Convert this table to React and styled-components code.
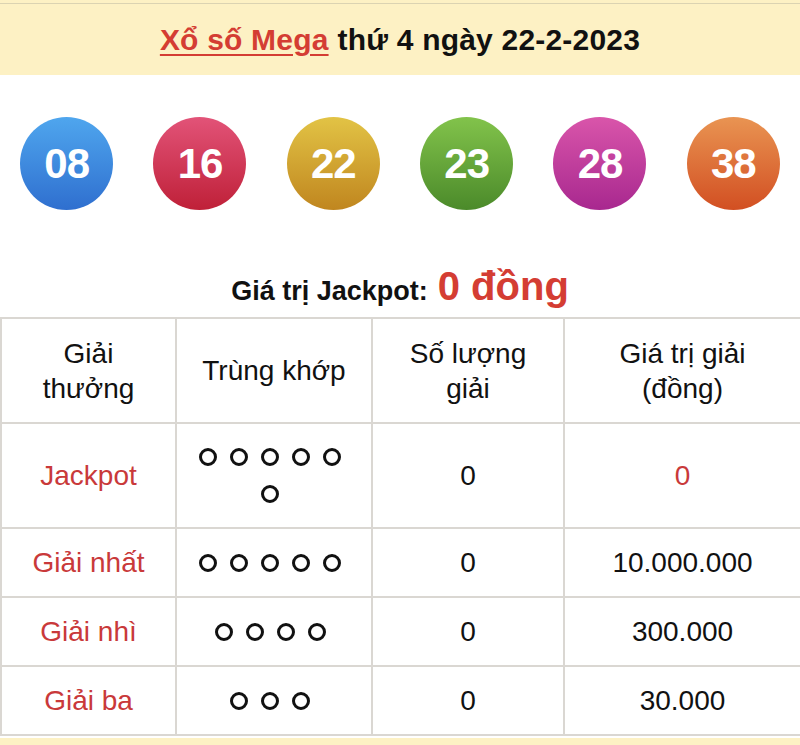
import React from 'react';
import styled, { createGlobalStyle } from 'styled-components';

const GlobalStyle = createGlobalStyle`
  body {
    margin: 0;
    background: #fff;
    font-family: "Liberation Sans", Arial, sans-serif;
    color: #111;
  }
`;

const Page = styled.div`
  width: 800px;
  height: 745px;
  overflow: hidden;
  background: #fff;
`;

const Strip = styled.div`
  height: 3px;
  background: #fdf1c4;
`;

const Header = styled.header`
  height: 71px;
  border-top: 1px solid #dbd3b2;
  background: #fdf1c4;
  display: flex;
  align-items: center;
  justify-content: center;
  gap: 9px;
  font-weight: 700;
  font-size: 30px;
  letter-spacing: 0.2px;
  color: #111;
  white-space: nowrap;
`;

const TitleLink = styled.a`
  color: #d43d33;
  text-decoration: underline;
  text-decoration-thickness: 2px;
  text-underline-offset: 4px;
`;

const Balls = styled.div`
  display: grid;
  grid-template-columns: repeat(6, 1fr);
  justify-items: center;
  padding: 42px 0 0;
  height: 134px;
  box-sizing: border-box;
`;

const Ball = styled.div`
  width: 93px;
  height: 93px;
  border-radius: 50%;
  background: linear-gradient(180deg, ${p => p.$top}, ${p => p.$bottom});
  display: flex;
  align-items: center;
  justify-content: center;
  color: #fff;
  font-weight: 700;
  font-size: 42px;
  letter-spacing: -1px;
`;

const Jackpot = styled.div`
  margin-top: 53px;
  height: 55px;
  display: flex;
  align-items: baseline;
  justify-content: center;
  padding-top: 2px;
  box-sizing: border-box;
  font-weight: 700;
  font-size: 27px;
  color: #111;
`;

const JackpotValue = styled.span`
  margin-left: 10px;
  font-size: 40px;
  color: #d43d33;
`;

const Table = styled.table`
  width: 800px;
  border-collapse: collapse;
  table-layout: fixed;
  font-size: 28px;
  line-height: 35px;
`;

const Th = styled.th`
  font-weight: 400;
  border: 2px solid #dad7d2;
  height: 103px;
  padding: 0 12px;
  text-align: center;
  vertical-align: middle;
  color: #111;
`;

const Td = styled.td`
  border: 2px solid #dad7d2;
  height: ${p => (p.$tall ? '103px' : '67px')};
  padding: ${p => (p.$dots ? '0 18px 0 10px' : '0 10px')};
  text-align: center;
  vertical-align: middle;
  color: ${p => (p.$red ? '#c9393a' : '#111')};
`;

const Dots = styled.div`
  display: flex;
  flex-wrap: wrap;
  justify-content: center;
  column-gap: 13px;
  row-gap: 19px;
  max-width: 160px;
  margin: 0 auto;
`;

const Dot = styled.span`
  width: 18px;
  height: 18px;
  box-sizing: border-box;
  border: 3.5px solid #111;
  border-radius: 50%;
`;

const BottomStrip = styled.div`
  margin-top: 2px;
  height: 10px;
  background: #fdf1c4;
`;

const balls = [
  { n: '08', top: '#4fa6ee', bottom: '#2f6fcf' },
  { n: '16', top: '#e25378', bottom: '#bf2038' },
  { n: '22', top: '#e2c345', bottom: '#c0861f' },
  { n: '23', top: '#82c34b', bottom: '#4b8a2a' },
  { n: '28', top: '#d955aa', bottom: '#a8288f' },
  { n: '38', top: '#e99452', bottom: '#d24f22' },
];

const prizes = [
  { name: 'Jackpot', dots: 6, count: '0', value: '0', tall: true, redValue: true },
  { name: 'Giải nhất', dots: 5, count: '0', value: '10.000.000' },
  { name: 'Giải nhì', dots: 4, count: '0', value: '300.000' },
  { name: 'Giải ba', dots: 3, count: '0', value: '30.000' },
];

const App = () => (
  <Page>
    <GlobalStyle />
    <Strip />
    <Header>
      <TitleLink href="#">Xổ số Mega</TitleLink>
      <span>thứ 4 ngày 22-2-2023</span>
    </Header>
    <Balls>
      {balls.map(b => (
        <Ball key={b.n} $top={b.top} $bottom={b.bottom}>
          {b.n}
        </Ball>
      ))}
    </Balls>
    <Jackpot>
      Giá trị Jackpot:<JackpotValue>0 đồng</JackpotValue>
    </Jackpot>
    <Table>
      <colgroup>
        <col style={{ width: 175 }} />
        <col style={{ width: 196 }} />
        <col style={{ width: 192 }} />
        <col style={{ width: 237 }} />
      </colgroup>
      <thead>
        <tr>
          <Th>Giải thưởng</Th>
          <Th>Trùng khớp</Th>
          <Th>Số lượng giải</Th>
          <Th>Giá trị giải (đồng)</Th>
        </tr>
      </thead>
      <tbody>
        {prizes.map(p => (
          <tr key={p.name}>
            <Td $tall={p.tall} $red>
              {p.name}
            </Td>
            <Td $tall={p.tall} $dots>
              <Dots>
                {Array.from({ length: p.dots }).map((_, i) => (
                  <Dot key={i} />
                ))}
              </Dots>
            </Td>
            <Td $tall={p.tall}>{p.count}</Td>
            <Td $tall={p.tall} $red={p.redValue}>
              {p.value}
            </Td>
          </tr>
        ))}
      </tbody>
    </Table>
    <BottomStrip />
  </Page>
);

export default App;
